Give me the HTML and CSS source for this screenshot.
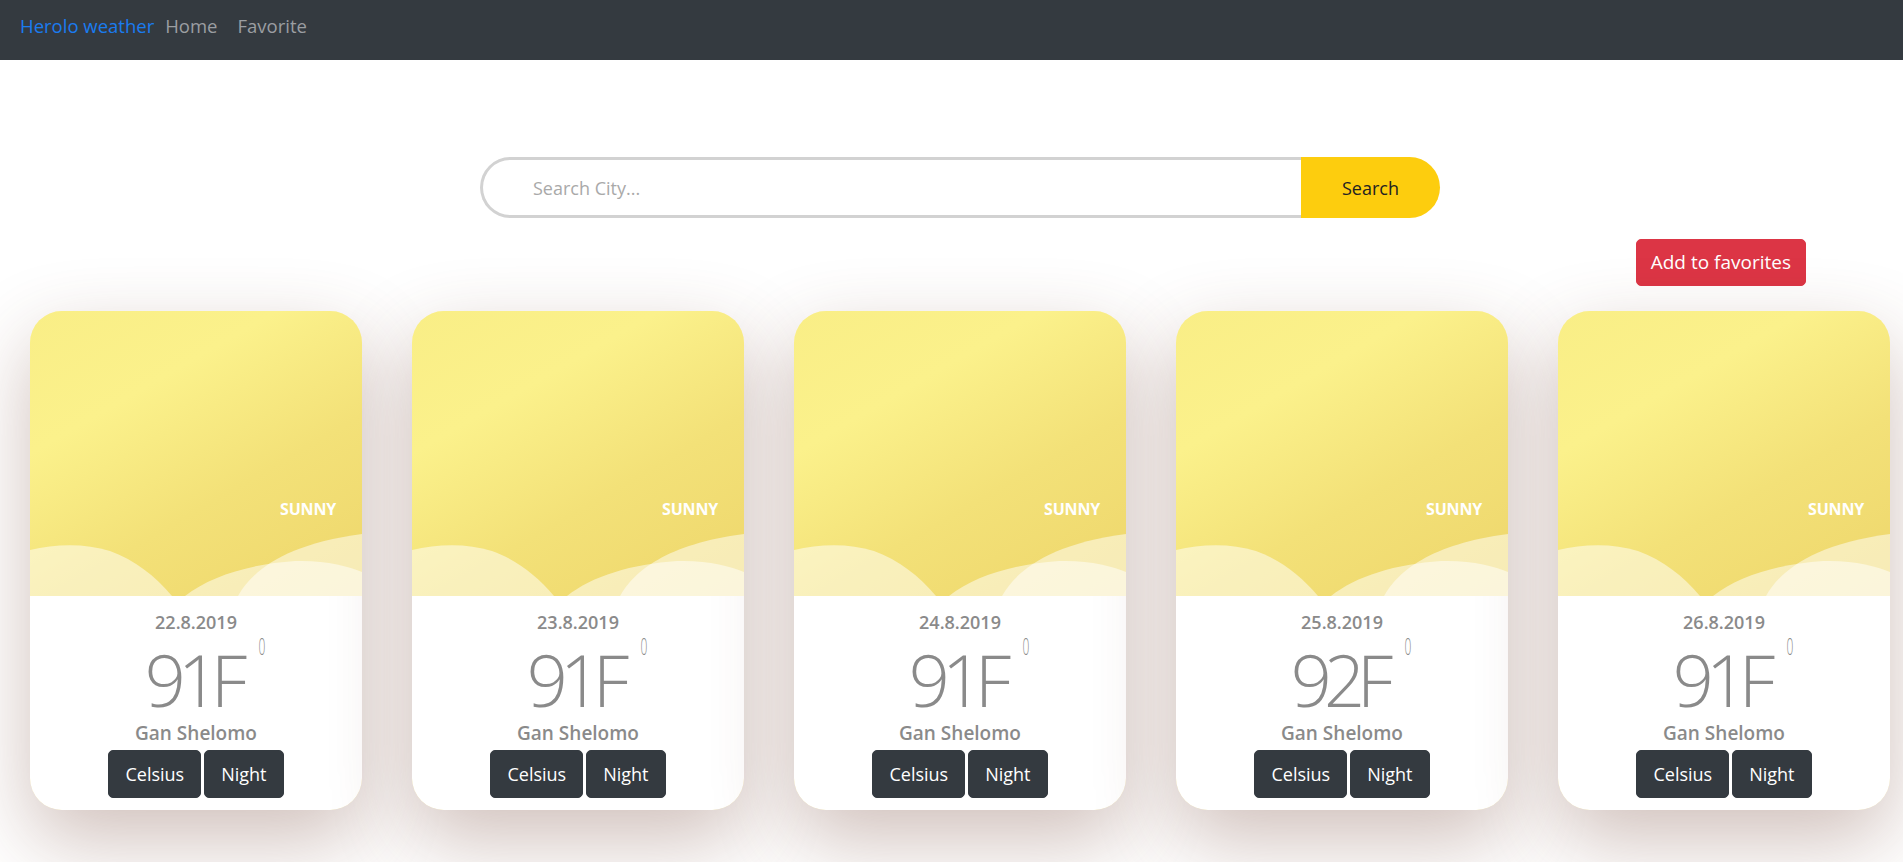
FILE: index.html
```html
<!DOCTYPE html>
<html lang="en">
<head>
<meta charset="utf-8">
<title>Herolo weather</title>
<link rel="stylesheet" href="styles.css">
</head>
<body>
<nav class="navbar">
  <a class="brand" href="#">Herolo weather</a>
  <a class="nav-link" href="#">Home</a>
  <a class="nav-link" href="#">Favorite</a>
</nav>
<main class="page">
  <form class="search">
    <input class="search-input" type="text" placeholder="Search City...">
    <button class="search-btn" type="button">Search</button>
  </form>
  <div class="fav-row">
    <button class="btn-fav" type="button">Add to favorites</button>
  </div>
  <section class="cards">
    <article class="card">
      <div class="card-top">
        <span class="condition">SUNNY</span>
        <svg class="waves" viewBox="0 0 332 70" preserveAspectRatio="none">
          <path d="M0,24 C25,18 55,17 80,25 C105,34 125,50 142,70 L0,70 Z"/>
          <path d="M155,70 C180,50 220,38 265,35 C295,34 318,40 332,46 L332,70 Z"/>
          <path d="M208,70 C222,45 255,18 332,8 L332,70 Z"/>
        </svg>
      </div>
      <div class="card-body">
        <div class="date">22.8.2019</div>
        <div class="temp">91F<sup class="deg">0</sup></div>
        <div class="city">Gan Shelomo</div>
        <div class="actions"><button class="btn-dark" type="button">Celsius</button><button class="btn-dark" type="button">Night</button></div>
      </div>
    </article>
    <article class="card">
      <div class="card-top">
        <span class="condition">SUNNY</span>
        <svg class="waves" viewBox="0 0 332 70" preserveAspectRatio="none">
          <path d="M0,24 C25,18 55,17 80,25 C105,34 125,50 142,70 L0,70 Z"/>
          <path d="M155,70 C180,50 220,38 265,35 C295,34 318,40 332,46 L332,70 Z"/>
          <path d="M208,70 C222,45 255,18 332,8 L332,70 Z"/>
        </svg>
      </div>
      <div class="card-body">
        <div class="date">23.8.2019</div>
        <div class="temp">91F<sup class="deg">0</sup></div>
        <div class="city">Gan Shelomo</div>
        <div class="actions"><button class="btn-dark" type="button">Celsius</button><button class="btn-dark" type="button">Night</button></div>
      </div>
    </article>
    <article class="card">
      <div class="card-top">
        <span class="condition">SUNNY</span>
        <svg class="waves" viewBox="0 0 332 70" preserveAspectRatio="none">
          <path d="M0,24 C25,18 55,17 80,25 C105,34 125,50 142,70 L0,70 Z"/>
          <path d="M155,70 C180,50 220,38 265,35 C295,34 318,40 332,46 L332,70 Z"/>
          <path d="M208,70 C222,45 255,18 332,8 L332,70 Z"/>
        </svg>
      </div>
      <div class="card-body">
        <div class="date">24.8.2019</div>
        <div class="temp">91F<sup class="deg">0</sup></div>
        <div class="city">Gan Shelomo</div>
        <div class="actions"><button class="btn-dark" type="button">Celsius</button><button class="btn-dark" type="button">Night</button></div>
      </div>
    </article>
    <article class="card">
      <div class="card-top">
        <span class="condition">SUNNY</span>
        <svg class="waves" viewBox="0 0 332 70" preserveAspectRatio="none">
          <path d="M0,24 C25,18 55,17 80,25 C105,34 125,50 142,70 L0,70 Z"/>
          <path d="M155,70 C180,50 220,38 265,35 C295,34 318,40 332,46 L332,70 Z"/>
          <path d="M208,70 C222,45 255,18 332,8 L332,70 Z"/>
        </svg>
      </div>
      <div class="card-body">
        <div class="date">25.8.2019</div>
        <div class="temp">92F<sup class="deg">0</sup></div>
        <div class="city">Gan Shelomo</div>
        <div class="actions"><button class="btn-dark" type="button">Celsius</button><button class="btn-dark" type="button">Night</button></div>
      </div>
    </article>
    <article class="card">
      <div class="card-top">
        <span class="condition">SUNNY</span>
        <svg class="waves" viewBox="0 0 332 70" preserveAspectRatio="none">
          <path d="M0,24 C25,18 55,17 80,25 C105,34 125,50 142,70 L0,70 Z"/>
          <path d="M155,70 C180,50 220,38 265,35 C295,34 318,40 332,46 L332,70 Z"/>
          <path d="M208,70 C222,45 255,18 332,8 L332,70 Z"/>
        </svg>
      </div>
      <div class="card-body">
        <div class="date">26.8.2019</div>
        <div class="temp">91F<sup class="deg">0</sup></div>
        <div class="city">Gan Shelomo</div>
        <div class="actions"><button class="btn-dark" type="button">Celsius</button><button class="btn-dark" type="button">Night</button></div>
      </div>
    </article>
  </section>
</main>
</body>
</html>
```
FILE: styles.css
```css
* { box-sizing: border-box; }
html, body { margin: 0; padding: 0; }
body {
  font-family: "Open Sans", "Noto Sans", "Liberation Sans", sans-serif;
  background: #fff;
  color: #212529;
  overflow: hidden;
  height: 862px;
}

.navbar {
  height: 60px;
  background: #343a40;
  display: flex;
  align-items: flex-start;
  padding: 8px 20px 0;
}
.navbar a { text-decoration: none; font-size: 18.5px; line-height: 36px; }
.brand { color: #1a7cf0; margin-right: 11px; }
.nav-link { color: #9b9ea2; margin-right: 20px; }

.page { display: flex; flex-direction: column; }

.search {
  display: flex;
  width: 960px;
  height: 61px;
  margin: 97px 0 0 480px;
}
.search-input {
  flex: 1;
  height: 61px;
  border: 3px solid #d2d2d2;
  border-right: none;
  border-radius: 31px 0 0 31px;
  padding: 0 0 0 50px;
  font-family: inherit;
  font-size: 18px;
  color: #333;
  outline: none;
  background: #fff;
}
.search-input::placeholder { color: #a9a9a9; }
.search-btn {
  width: 139px;
  height: 61px;
  border: none;
  border-radius: 0 31px 31px 0;
  background: #fdcd0e;
  color: #222;
  font-family: inherit;
  font-size: 18px;
  padding: 0;
}

.fav-row {
  display: flex;
  justify-content: flex-end;
  padding-right: 97px;
  margin-top: 21px;
}
.btn-fav {
  height: 47px;
  padding: 0 14px;
  border: 1px solid #dc3545;
  border-radius: 5px;
  background: #dc3545;
  color: #fff;
  font-family: inherit;
  font-size: 19px;
  line-height: 29px;
}

.cards {
  display: flex;
  gap: 50px;
  padding-left: 30px;
  margin-top: 25px;
}
.card {
  width: 332px;
  height: 499px;
  flex: none;
  border-radius: 32px;
  overflow: hidden;
  background: #fbf3cf;
  box-shadow: 0 30px 80px rgba(110, 60, 45, 0.32);
  display: flex;
  flex-direction: column;
}
.card-top {
  position: relative;
  height: 285px;
  flex: none;
  background: linear-gradient(150deg, #f9ee86 0%, #fbf18b 30%, #f3e178 62%, #eed66b 100%);
  display: flex;
  flex-direction: column;
  justify-content: flex-end;
  align-items: flex-end;
  padding: 0 26px 77px;
}
.condition {
  color: #fff;
  font-weight: 700;
  font-size: 16px;
  line-height: 20px;
  letter-spacing: -0.2px;
}
.waves {
  position: absolute;
  left: 0;
  bottom: 0;
  width: 100%;
  height: 70px;
  display: block;
}
.waves path { fill: rgba(255, 255, 255, 0.5); }

.card-body {
  flex: 1;
  background: #fff;
  border-radius: 0 0 32px 32px;
  display: flex;
  flex-direction: column;
  align-items: center;
  padding: 14px 0 11px;
  color: #8a8a8a;
}
.date {
  font-size: 18px;
  font-weight: 600;
  line-height: 24px;
}
.temp {
  position: relative;
  margin-top: 15px;
  font-size: 72px;
  font-weight: 300;
  line-height: 60px;
  letter-spacing: -8px;
  padding-right: 8px;
}
.deg {
  position: absolute;
  left: 100%;
  top: -15px;
  margin-left: 8px;
  font-size: 24px;
  font-weight: 300;
  letter-spacing: 0;
  line-height: 24px;
  transform: scaleX(0.5);
}
.city {
  margin-top: 12px;
  font-size: 19px;
  font-weight: 600;
  line-height: 24px;
}
.actions {
  display: flex;
  gap: 3px;
  margin-top: 5px;
}
.btn-dark {
  height: 48px;
  padding: 0 16px;
  border: 1px solid #343a40;
  border-radius: 5px;
  background: #343a40;
  color: #fff;
  font-family: inherit;
  font-size: 18px;
  line-height: 30px;
}
```
